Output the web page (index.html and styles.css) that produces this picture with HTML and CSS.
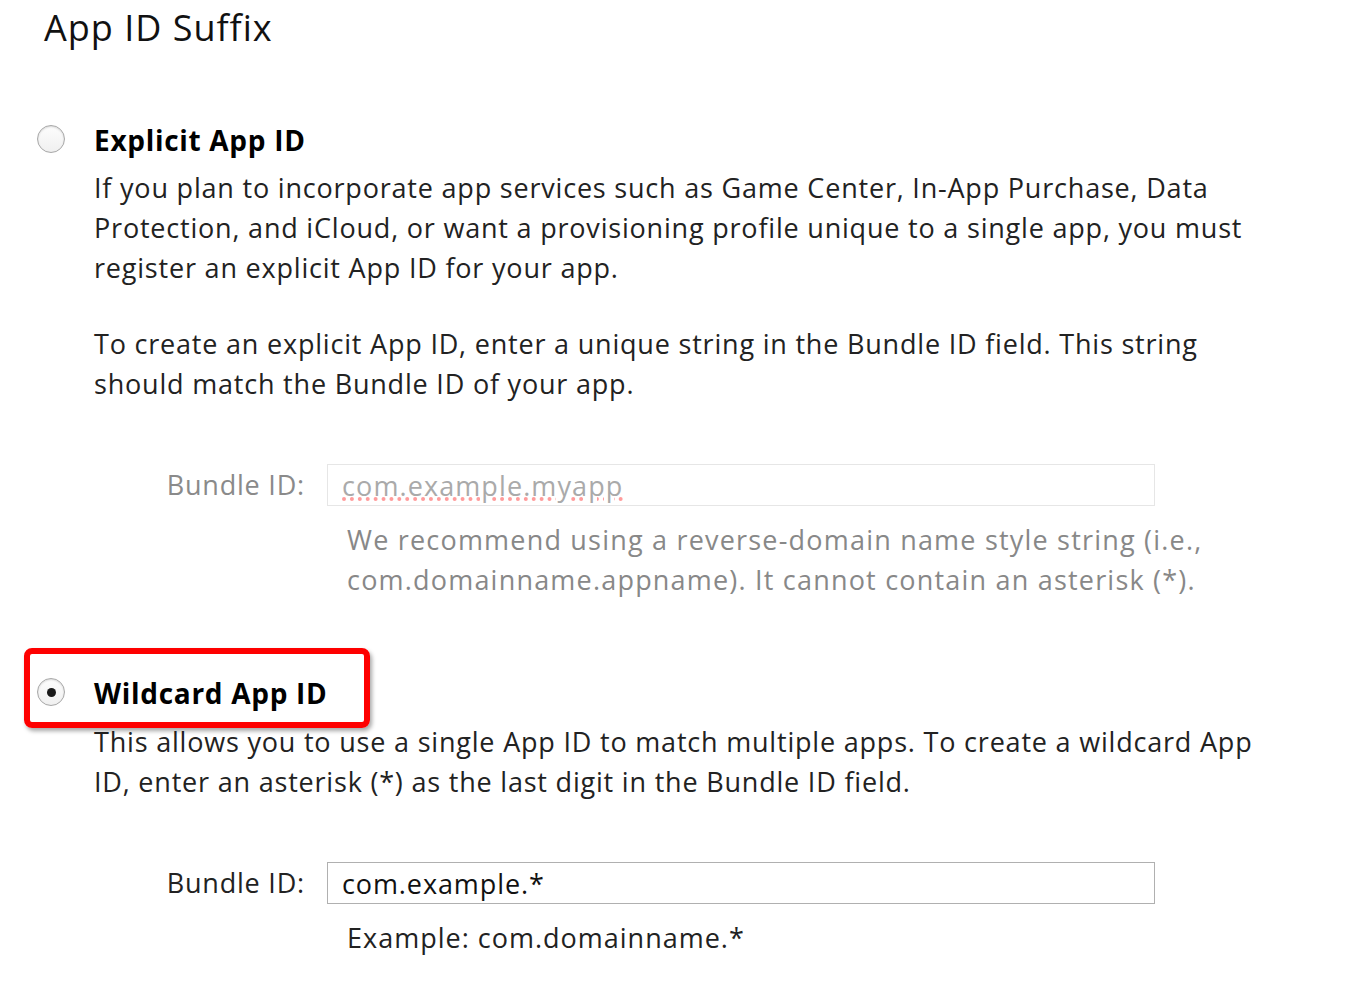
FILE: index.html
```html
<!DOCTYPE html>
<html>
<head>
<meta charset="utf-8">
<title>App ID Suffix</title>
<link rel="stylesheet" href="styles.css">
</head>
<body>
<div class="page">
  <h1 class="title">App ID Suffix</h1>

  <section class="option option-explicit">
    <div class="radio-row">
      <span class="radio"></span>
      <span class="option-label">Explicit App ID</span>
    </div>
    <div class="option-body">
      <p class="desc">If you plan to incorporate app services such as Game Center, In-App Purchase, Data Protection, and iCloud, or want a provisioning profile unique to a single app, you must register an explicit App ID for your app.</p>
      <p class="desc desc-second">To create an explicit App ID, enter a unique string in the Bundle ID field. This string should match the Bundle ID of your app.</p>
      <div class="field field-disabled">
        <span class="field-label">Bundle ID:</span>
        <div class="field-input"><span class="placeholder">com.example.myapp</span></div>
      </div>
      <p class="hint hint-disabled">We recommend using a reverse-domain name style string (i.e., com.domainname.appname). It cannot contain an asterisk (*).</p>
    </div>
  </section>

  <section class="option option-wildcard">
    <div class="radio-row highlighted">
      <span class="radio checked"></span>
      <span class="option-label">Wildcard App ID</span>
    </div>
    <div class="option-body">
      <p class="desc">This allows you to use a single App ID to match multiple apps. To create a wildcard App ID, enter an asterisk (*) as the last digit in the Bundle ID field.</p>
      <div class="field">
        <span class="field-label">Bundle ID:</span>
        <div class="field-input active"><span class="value">com.example.*</span></div>
      </div>
      <p class="hint">Example: com.domainname.*</p>
    </div>
  </section>
</div>
</body>
</html>
```
FILE: styles.css
```css
html, body {
  margin: 0;
  padding: 0;
  background: #fff;
}
body {
  font-family: "Open Sans", "Noto Sans", sans-serif;
  color: #333;
}
.page {
  width: 1348px;
  height: 990px;
  overflow: hidden;
}
.title {
  margin: 8px 0 0 44px;
  font-size: 36px;
  line-height: 40px;
  font-weight: 400;
  letter-spacing: 1px;
  color: #111;
}
.option-explicit {
  margin-top: 71px;
}
.option-wildcard {
  margin-top: 72px;
}
.radio-row {
  display: flex;
  align-items: center;
  height: 40px;
  padding-left: 37px;
  position: relative;
}
.radio-row.highlighted::before {
  content: "";
  position: absolute;
  left: 24px;
  top: -24px;
  width: 346px;
  height: 80px;
  box-sizing: border-box;
  border: 6px solid #fe0000;
  border-radius: 8px;
  box-shadow: 2px 3px 4px rgba(0, 0, 0, 0.35);
}
.radio {
  width: 28px;
  height: 28px;
  box-sizing: border-box;
  border-radius: 50%;
  border: 1px solid #a8a8a8;
  background: linear-gradient(#fdfdfd, #f0f0f0);
  box-shadow: inset 0 1px 2px rgba(0, 0, 0, 0.15);
  display: flex;
  align-items: center;
  justify-content: center;
  margin-right: 29px;
}
.radio.checked::after {
  content: "";
  width: 9px;
  height: 9px;
  border-radius: 50%;
  background: #1a1a1a;
}
.option-label {
  font-size: 28px;
  font-weight: 700;
  letter-spacing: 0.7px;
  color: #000;
  position: relative;
  top: 1px;
}
.option-body {
  padding-left: 94px;
  padding-top: 9px;
}
.option-wildcard .option-body {
  padding-top: 10px;
}
.desc {
  margin: 0;
  width: 1172px;
  font-size: 27px;
  line-height: 40px;
  letter-spacing: 0.8px;
  color: #222;
}
.desc-second {
  margin-top: 36px;
}
.field {
  display: flex;
  align-items: center;
  margin-top: 60px;
}
.field-label {
  width: 211px;
  text-align: right;
  margin-right: 22px;
  font-size: 27px;
  letter-spacing: 0.8px;
  color: #222;
  position: relative;
  top: -1px;
}
.field-disabled .field-label {
  color: #8a8a8a;
}
.field-input {
  width: 828px;
  height: 42px;
  box-sizing: border-box;
  border: 1px solid #e6e6e6;
  padding-left: 14px;
  display: flex;
  align-items: center;
  font-size: 27px;
  letter-spacing: 0.9px;
}
.field-input.active {
  border-color: #b0b0b0;
}
.placeholder {
  color: #aaa;
  letter-spacing: 1.1px;
  text-decoration-line: underline;
  text-decoration-style: dotted;
  text-decoration-color: rgba(255, 90, 90, 0.6);
  text-decoration-thickness: 4px;
  text-underline-offset: 2px;
}
.value {
  color: #111;
}
.hint {
  margin: 14px 0 0 253px;
  width: 900px;
  font-size: 27px;
  line-height: 40px;
  letter-spacing: 1px;
  color: #222;
}
.hint-disabled {
  color: #888;
  letter-spacing: 1.2px;
}
```
